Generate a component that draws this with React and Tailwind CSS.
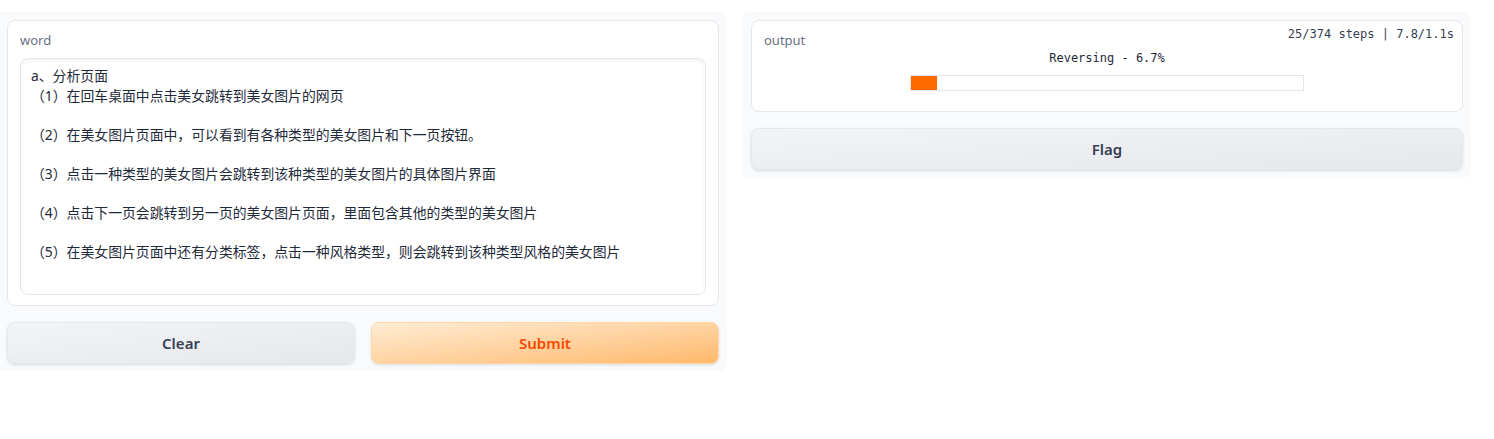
const lines = [
  'a、分析页面',
  '（1）在回车桌面中点击美女跳转到美女图片的网页',
  '',
  '（2）在美女图片页面中，可以看到有各种类型的美女图片和下一页按钮。',
  '',
  '（3）点击一种类型的美女图片会跳转到该种类型的美女图片的具体图片界面',
  '',
  '（4）点击下一页会跳转到另一页的美女图片页面，里面包含其他的类型的美女图片',
  '',
  '（5）在美女图片页面中还有分类标签，点击一种风格类型，则会跳转到该种类型风格的美女图片',
];

const sans = { fontFamily: '"Noto Sans", "Noto Sans CJK SC", sans-serif' };
const mono = { fontFamily: '"DejaVu Sans Mono", "Liberation Mono", monospace' };

const Button = ({ children, variant }) => (
  <button
    className={`h-[42px] flex-1 rounded-lg border text-[15px] font-semibold shadow-sm ${
      variant === 'primary'
        ? 'border-orange-200 bg-gradient-to-br from-orange-100 to-orange-300 text-orange-600'
        : 'border-gray-200 bg-gradient-to-br from-gray-100 to-gray-200 text-gray-700'
    }`}
  >
    {children}
  </button>
);

export default function App() {
  const pct = 6.7;
  return (
    <div className="flex items-start gap-[15px] bg-white pt-3" style={sans}>
      {/* input column */}
      <div className="flex w-[727px] flex-col gap-4 rounded-r-lg bg-gray-50 pb-[7px] pl-[7px] pr-2 pt-2">
        <div className="flex h-[286px] flex-col rounded-lg border border-gray-200 bg-white px-3 pb-[10px] pt-[9px]">
          <span className="mb-[8px] block text-[13px] leading-5 text-gray-500">word</span>
          <div className="flex-1 rounded-lg border border-gray-200 px-[10px] pt-[7px] text-[13.85px] leading-[19.6px] text-gray-800 shadow-inner">
            {lines.map((l, i) => (
              <div key={i} className="h-[19.6px] whitespace-pre">
                {l}
              </div>
            ))}
          </div>
        </div>
        <div className="flex gap-4">
          <Button>Clear</Button>
          <Button variant="primary">Submit</Button>
        </div>
      </div>

      {/* output column */}
      <div className="flex w-[729px] flex-col gap-4 rounded-lg bg-gray-50 py-2 pl-[9px] pr-2">
        <div className="relative h-[92px] rounded-lg border border-gray-200 bg-white px-3 pt-[9px]">
          <span className="block text-[13px] leading-5 text-gray-500">output</span>
          <div className="absolute right-2 top-[4px] text-[12px] text-gray-700" style={mono}>
            25/374 steps | 7.8/1.1s
          </div>
          <div className="absolute inset-x-0 top-[29px] flex flex-col items-center gap-[9px]">
            <div className="text-[12px] leading-4 text-gray-800" style={mono}>
              Reversing - 6.7%
            </div>
            <div className="h-[16px] w-[394px] border border-gray-200 bg-white">
              <div className="h-full bg-orange-500" style={{ width: `${pct}%` }} />
            </div>
          </div>
        </div>
        <div className="flex">
          <Button>Flag</Button>
        </div>
      </div>
    </div>
  );
}
